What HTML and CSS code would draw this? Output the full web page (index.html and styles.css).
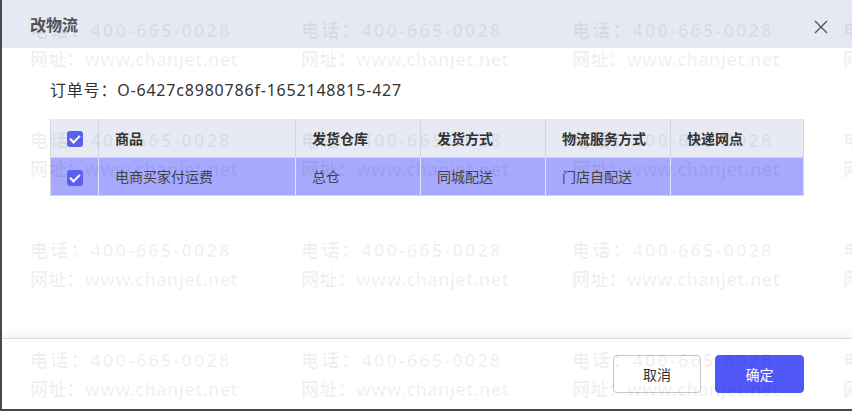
FILE: index.html
```html
<!DOCTYPE html>
<html lang="zh-CN">
<head>
    <meta charset="UTF-8">
    <meta name="viewport" content="width=device-width, initial-scale=1.0">
    <title>改物流</title>
    <link rel="stylesheet" href="styles.css">
</head>
<body>
    <div class="dialog">
        <div class="dialog-header">
            <span class="dialog-title">改物流</span>
            <button class="close-btn" aria-label="关闭">
                <svg width="14" height="14" viewBox="0 0 14 14"><path d="M1 1L13 13M13 1L1 13" stroke="#555" stroke-width="1.4" fill="none"/></svg>
            </button>
        </div>

        <div class="dialog-body">
            <p class="order-no">订单号：O-6427c8980786f-1652148815-427</p>
            <table class="goods-table">
                <thead>
                    <tr>
                        <th class="col-check"><span class="checkbox checked"></span></th>
                        <th class="col-name">商品</th>
                        <th class="col-mid">发货仓库</th>
                        <th class="col-mid">发货方式</th>
                        <th class="col-mid">物流服务方式</th>
                        <th>快递网点</th>
                    </tr>
                </thead>
                <tbody>
                    <tr class="selected">
                        <td class="col-check"><span class="checkbox checked"></span></td>
                        <td>电商买家付运费</td>
                        <td>总仓</td>
                        <td>同城配送</td>
                        <td>门店自配送</td>
                        <td></td>
                    </tr>
                </tbody>
            </table>
        </div>

        <div class="dialog-footer">
            <button class="btn">取消</button>
            <button class="btn btn-primary">确定</button>
        </div>
    </div>

    <div class="watermark">
        <div class="wm-grid">
            <div class="wm"><span class="tel">电话：400-665-0028</span><span class="url">网址：www.chanjet.net</span></div>
            <div class="wm"><span class="tel">电话：400-665-0028</span><span class="url">网址：www.chanjet.net</span></div>
            <div class="wm"><span class="tel">电话：400-665-0028</span><span class="url">网址：www.chanjet.net</span></div>
            <div class="wm"><span class="tel">电</span><span class="url">网</span></div>
            <div class="wm"><span class="tel">电话：400-665-0028</span><span class="url">网址：www.chanjet.net</span></div>
            <div class="wm"><span class="tel">电话：400-665-0028</span><span class="url">网址：www.chanjet.net</span></div>
            <div class="wm"><span class="tel">电话：400-665-0028</span><span class="url">网址：www.chanjet.net</span></div>
            <div class="wm"><span class="tel">电</span><span class="url">网</span></div>
            <div class="wm"><span class="tel">电话：400-665-0028</span><span class="url">网址：www.chanjet.net</span></div>
            <div class="wm"><span class="tel">电话：400-665-0028</span><span class="url">网址：www.chanjet.net</span></div>
            <div class="wm"><span class="tel">电话：400-665-0028</span><span class="url">网址：www.chanjet.net</span></div>
            <div class="wm"><span class="tel">电</span><span class="url">网</span></div>
            <div class="wm"><span class="tel">电话：400-665-0028</span><span class="url">网址：www.chanjet.net</span></div>
            <div class="wm"><span class="tel">电话：400-665-0028</span><span class="url">网址：www.chanjet.net</span></div>
            <div class="wm"><span class="tel">电话：400-665-0028</span><span class="url">网址：www.chanjet.net</span></div>
            <div class="wm"><span class="tel">电</span><span class="url">网</span></div>
        </div>
    </div>
</body>
</html>
```

FILE: styles.css
```css
html, body {
    margin: 0;
    padding: 0;
    height: 100%;
}
body {
    font-family: "Noto Sans", "Noto Sans CJK SC", sans-serif;
    color: #333;
    background: #fff;
    overflow: hidden;
    position: relative;
}
.dialog {
    height: 411px;
    box-sizing: border-box;
    border-left: 2px solid #4a4a4a;
    border-bottom: 2px solid #4a4a4a;
    display: flex;
    flex-direction: column;
    background: #fff;
}
.dialog-header {
    height: 48px;
    flex: none;
    background-color: #e6e9f4;
    display: flex;
    align-items: center;
    justify-content: space-between;
    padding: 0 24px 0 28px;
}
.dialog-title {
    font-size: 16px;
    font-weight: bold;
    color: #555;
}
.close-btn {
    border: none;
    background: none;
    padding: 0;
    width: 14px;
    height: 14px;
    margin-top: 6px;
    cursor: pointer;
}
.close-btn svg {
    display: block;
}
.dialog-body {
    flex: 1;
    padding: 30px 48px 0 48px;
}
.order-no {
    margin: 0 0 17px;
    font-size: 16px;
    line-height: 24px;
    letter-spacing: 0.8px;
    color: #333;
}
.goods-table {
    width: 754px;
    border-collapse: collapse;
    font-size: 14px;
    table-layout: fixed;
}
.goods-table th, .goods-table td {
    height: 38px;
    padding: 0 0 0 16px;
    text-align: left;
    box-sizing: border-box;
}
.goods-table th {
    background-color: #e7eaf3;
    font-weight: bold;
    color: #333;
    border: 1px solid #d3d6df;
    border-top: none;
}
.goods-table td {
    color: #444;
    border: 1px solid #e4e5fb;
    border-top-color: #d3d6df;
    border-bottom-color: #d8d9e6;
}
.goods-table tr.selected td {
    background-color: #a6a9fd;
}
.goods-table .col-check {
    width: 48px;
    padding: 0;
    text-align: center;
    border-left-color: #d3d6df;
}
.goods-table .col-name {
    width: 197px;
}
.goods-table .col-mid {
    width: 125px;
}
.goods-table th:last-child, .goods-table td:last-child {
    border-right-color: #d3d6df;
}
.checkbox {
    display: inline-block;
    width: 16px;
    height: 16px;
    border-radius: 3px;
    vertical-align: middle;
    position: relative;
    background-color: #5a60f2;
}
.checkbox.checked::after {
    content: "";
    position: absolute;
    left: 5px;
    top: 2px;
    width: 4px;
    height: 8px;
    border: solid #fff;
    border-width: 0 2px 2px 0;
    transform: rotate(45deg);
}
.dialog-footer {
    height: 70px;
    flex: none;
    border-top: 1px solid #d9d9d9;
    box-shadow: 0 -3px 8px rgba(0, 0, 0, 0.06);
    display: flex;
    justify-content: flex-end;
    align-items: center;
    gap: 14px;
    padding-right: 48px;
}
.btn {
    width: 88px;
    height: 38px;
    border: 1px solid #c8c8c8;
    border-radius: 4px;
    background: #fff;
    color: #333;
    font-family: "Noto Sans CJK SC", sans-serif;
    font-size: 14px;
    cursor: pointer;
}
.btn-primary {
    width: 89px;
    border-color: #5058f8;
    background-color: #5058f8;
    color: #fff;
}
.watermark {
    position: absolute;
    top: 0;
    left: 0;
    right: 0;
    bottom: 0;
    overflow: hidden;
    pointer-events: none;
}
.wm-grid {
    display: grid;
    grid-template-columns: repeat(3, 271px) 9px;
    grid-auto-rows: 110px;
    padding: 16px 0 0 30px;
    font-family: "Noto Sans", "Noto Sans CJK SC", sans-serif;
    font-size: 18px;
    font-weight: 600;
    color: rgba(0, 0, 0, 0.06);
    white-space: nowrap;
}
.wm {
    overflow: hidden;
}
.wm span {
    display: block;
    line-height: 29px;
}
.wm .tel {
    letter-spacing: 2.2px;
}
.wm .url {
    letter-spacing: 0.3px;
}
```
